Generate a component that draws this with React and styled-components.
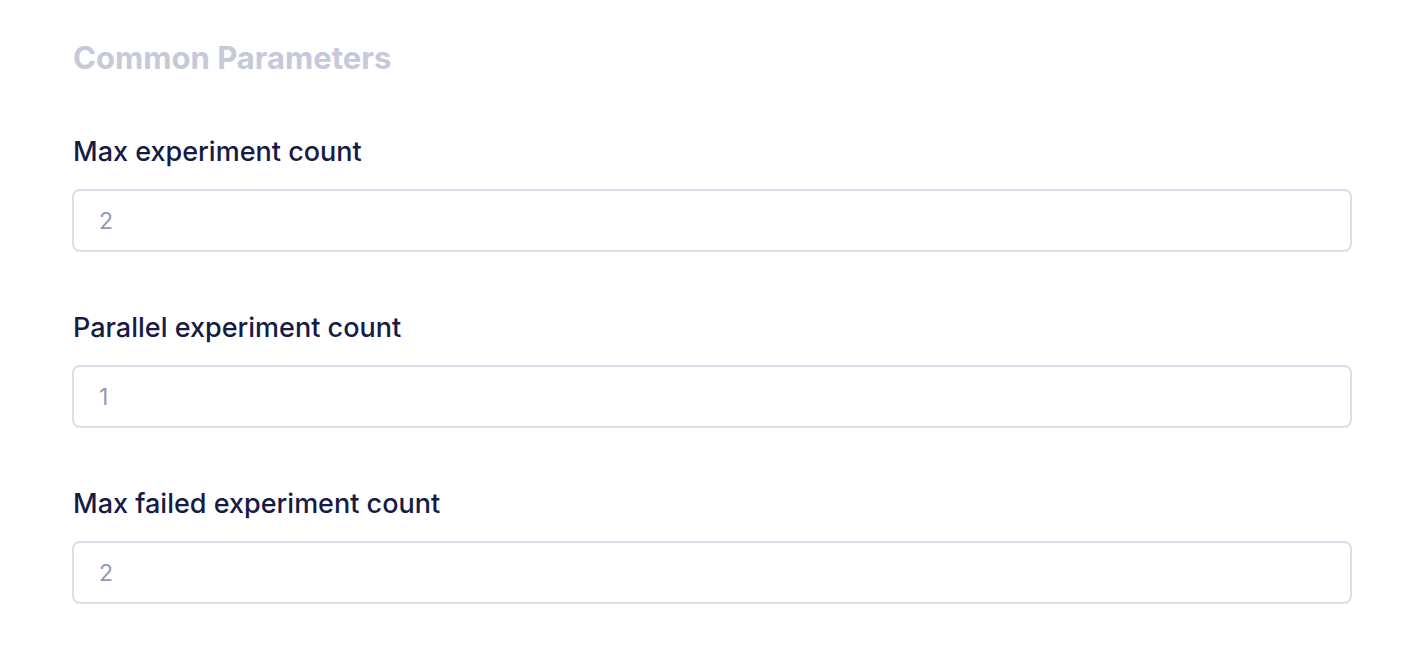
import React from 'react';
import styled, { createGlobalStyle } from 'styled-components';

const GlobalStyle = createGlobalStyle`
  body {
    margin: 0;
    background: #ffffff;
    font-family: Inter, "Noto Sans", sans-serif;
  }
`;

const Page = styled.div`
  padding: 38px 74px 40px 72px;
`;

const Title = styled.h2`
  margin: 0 0 56px 1px;
  font-size: 31px;
  font-weight: 700;
  line-height: 40px;
  color: #c6c9da;
`;

const Field = styled.div`
  display: flex;
  flex-direction: column;
  gap: 19px;
  margin-bottom: 58px;
  &:last-child {
    margin-bottom: 0;
  }
`;

const Label = styled.label`
  font-size: 27px;
  font-weight: 500;
  line-height: 36px;
  color: #161b45;
  padding-left: 1px;
`;

const Input = styled.input`
  box-sizing: border-box;
  height: 63px;
  width: 100%;
  padding: 0 25px;
  border: 2px solid #dcdde8;
  border-radius: 8px;
  font-family: inherit;
  font-size: 23px;
  color: #9597b4;
  background: #ffffff;
  outline: none;
  &::placeholder {
    color: #9597b4;
  }
`;

const fields = [
  { label: 'Max experiment count', value: '2' },
  { label: 'Parallel experiment count', value: '1' },
  { label: 'Max failed experiment count', value: '2' },
];

const App = () => (
  <>
    <GlobalStyle />
    <Page>
      <Title>Common Parameters</Title>
      {fields.map((f) => (
        <Field key={f.label}>
          <Label>{f.label}</Label>
          <Input placeholder={f.value} readOnly />
        </Field>
      ))}
    </Page>
  </>
);

export default App;
